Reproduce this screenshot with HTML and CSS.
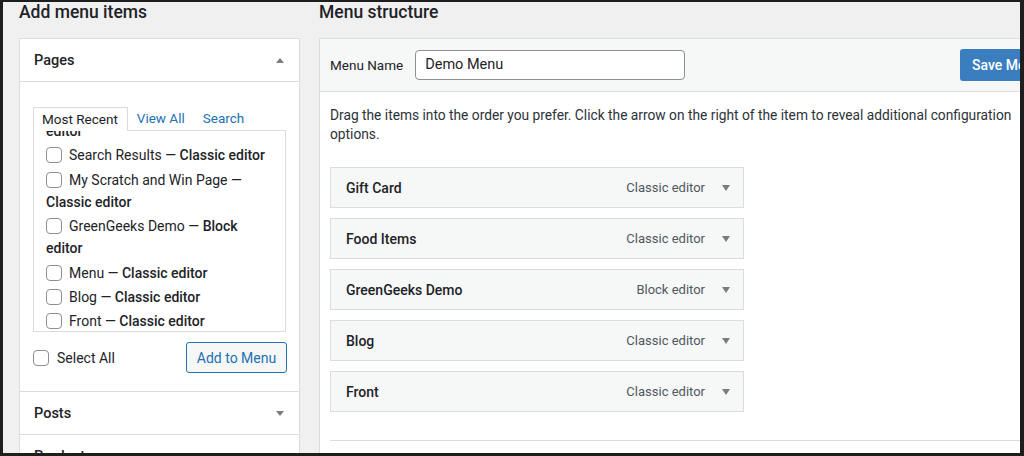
FILE: index.html
```html
<!DOCTYPE html>
<html lang="en">
<head>
<meta charset="utf-8">
<title>Menus</title>
<link rel="stylesheet" href="styles.css">
</head>
<body>
<div class="screen">
  <div class="wrap">
    <div class="col-left">
      <h2 class="title">Add menu items</h2>
      <div class="accordion">
        <div class="sec">
          <div class="sec-head">
            <span>Pages</span>
            <svg class="arrow" width="8" height="5" viewBox="0 0 8 5"><polygon points="4,0 8,5 0,5"/></svg>
          </div>
          <div class="sec-body">
            <div class="tabs">
              <span class="tab active">Most Recent</span>
              <span class="tab">View All</span>
              <span class="tab">Search</span>
            </div>
            <div class="tab-panel">
              <ul class="checklist">
                <li class="cont"><b>editor</b></li>
                <li><span class="cb"></span>Search Results — <b>Classic editor</b></li>
                <li><span class="cb"></span>My Scratch and Win Page — <b>Classic editor</b></li>
                <li><span class="cb"></span>GreenGeeks Demo — <b>Block editor</b></li>
                <li><span class="cb"></span>Menu — <b>Classic editor</b></li>
                <li><span class="cb"></span>Blog — <b>Classic editor</b></li>
                <li><span class="cb"></span>Front — <b>Classic editor</b></li>
              </ul>
            </div>
            <div class="actions">
              <label class="select-all"><span class="cb"></span>Select All</label>
              <span class="btn-secondary">Add to Menu</span>
            </div>
          </div>
        </div>
        <div class="sec">
          <div class="sec-head">
            <span>Posts</span>
            <svg class="arrow" width="8" height="5" viewBox="0 0 8 5"><polygon points="0,0 8,0 4,5"/></svg>
          </div>
        </div>
        <div class="sec">
          <div class="sec-head">
            <span>Products</span>
            <svg class="arrow" width="8" height="5" viewBox="0 0 8 5"><polygon points="0,0 8,0 4,5"/></svg>
          </div>
        </div>
      </div>
    </div>
    <div class="col-right">
      <h2 class="title">Menu structure</h2>
      <div class="menu-panel">
        <div class="menu-head">
          <div class="name-group">
            <span class="label">Menu Name</span>
            <span class="input">Demo Menu</span>
          </div>
          <span class="btn-primary">Save Menu</span>
        </div>
        <div class="menu-body">
          <p class="desc">Drag the items into the order you prefer. Click the arrow on the right of the item to reveal additional configuration options.</p>
          <ul class="items">
            <li class="item"><span class="item-title">Gift Card</span><span class="item-meta">Classic editor</span><svg class="item-arrow" width="8" height="6" viewBox="0 0 8 6"><polygon points="0,0 8,0 4,6"/></svg></li>
            <li class="item"><span class="item-title">Food Items</span><span class="item-meta">Classic editor</span><svg class="item-arrow" width="8" height="6" viewBox="0 0 8 6"><polygon points="0,0 8,0 4,6"/></svg></li>
            <li class="item"><span class="item-title">GreenGeeks Demo</span><span class="item-meta">Block editor</span><svg class="item-arrow" width="8" height="6" viewBox="0 0 8 6"><polygon points="0,0 8,0 4,6"/></svg></li>
            <li class="item"><span class="item-title">Blog</span><span class="item-meta">Classic editor</span><svg class="item-arrow" width="8" height="6" viewBox="0 0 8 6"><polygon points="0,0 8,0 4,6"/></svg></li>
            <li class="item"><span class="item-title">Front</span><span class="item-meta">Classic editor</span><svg class="item-arrow" width="8" height="6" viewBox="0 0 8 6"><polygon points="0,0 8,0 4,6"/></svg></li>
          </ul>
          <div class="footer"></div>
        </div>
      </div>
    </div>
  </div>
</div>
</body>
</html>
```

FILE: styles.css
```css
* { box-sizing: border-box; }
html, body { margin: 0; padding: 0; background: #1e1e1e; }
body { font-family: Roboto, "Noto Sans", sans-serif; color: #1d2327; font-size: 13px; }

.screen {
  width: 1024px;
  height: 456px;
  border-style: solid;
  border-color: #1e1e1e;
  border-width: 2px 4px 3px 3px;
  background: #f0f0f1;
  overflow: hidden;
}
.wrap {
  display: flex;
  gap: 19px;
  padding-left: 16px;
  width: 1100px;
}
.col-left { width: 281px; flex: none; }
.col-right { width: 760px; flex: none; }

.title {
  margin: 0 0 16px;
  font-size: 17.5px;
  line-height: 20px;
  font-weight: 500;
  color: #1d2327;
}

.accordion {
  background: #fff;
  border: 1px solid #dcdcde;
}
.sec-head {
  height: 43px;
  border-bottom: 1px solid #dcdcde;
  display: flex;
  align-items: center;
  justify-content: space-between;
  padding: 0 15px 0 14px;
  font-size: 14.5px;
  font-weight: 500;
  background: #fff;
}
.arrow { fill: #787c82; }

.sec-body {
  padding: 25px 13px 18px 13px;
  border-bottom: 1px solid #dcdcde;
}

.tabs {
  display: flex;
  height: 24px;
  font-size: 13.5px;
  line-height: 23px;
  position: relative;
  z-index: 1;
}
.tab { padding: 0 9px; color: #2271b1; }
.tab.active {
  color: #1d2327;
  background: #fff;
  border: 1px solid #dcdcde;
  border-bottom: none;
  padding: 0 9px 0 8px;
}
.tab-panel {
  margin-top: -1px;
  height: 202px;
  border: 1px solid #dcdcde;
  overflow: hidden;
  padding: 0 11px 0 12px;
}
.checklist {
  list-style: none;
  margin: -11px 0 0;
  padding: 0;
  font-size: 14px;
  line-height: 22.3px;
}
.checklist li { margin-bottom: 2px; }
.checklist b { font-weight: 500; }
.cb {
  display: inline-block;
  width: 16px;
  height: 16px;
  border: 1px solid #8c8f94;
  border-radius: 4px;
  background: #fff;
  vertical-align: -3px;
  margin-right: 7px;
}

.actions {
  margin-top: 10px;
  display: flex;
  align-items: center;
  justify-content: space-between;
  margin-right: -1px;
}
.select-all { font-size: 14px; display: flex; align-items: center; }
.select-all .cb { margin-right: 8px; }
.btn-secondary {
  display: inline-flex;
  align-items: center;
  justify-content: center;
  width: 101px;
  height: 31px;
  border: 1.5px solid #2271b1;
  border-radius: 3px;
  background: #f6f7f7;
  color: #2271b1;
  font-size: 14px;
}

.menu-panel {
  background: #fff;
  border: 1px solid #dcdcde;
}
.menu-head {
  height: 53px;
  background: #f6f7f7;
  border-bottom: 1px solid #dcdcde;
  display: flex;
  align-items: center;
  justify-content: space-between;
  padding: 0 24px 1px 10px;
}
.name-group { display: flex; align-items: center; gap: 12px; }
.label { font-size: 13.5px; }
.input {
  width: 270px;
  height: 30px;
  border: 1px solid #8c8f94;
  border-radius: 4px;
  background: #fff;
  padding: 0 9px;
  font-size: 14.5px;
  line-height: 28px;
}
.btn-primary {
  width: 94px;
  height: 32px;
  background: #3a7ebf;
  color: #fff;
  border-radius: 3px;
  font-size: 14px;
  font-weight: 500;
  display: inline-flex;
  align-items: center;
  padding-left: 12px;
}

.menu-body { padding: 14px 0 0 10px; }
.desc {
  margin: 0;
  max-width: 700px;
  font-size: 13.75px;
  line-height: 19px;
  color: #2c3338;
}
.items {
  list-style: none;
  margin: 23px 0 0;
  padding: 0;
  display: flex;
  flex-direction: column;
  gap: 10px;
}
.item {
  width: 414px;
  height: 41px;
  background: #f6f7f7;
  border: 1px solid #dcdcde;
  display: flex;
  align-items: center;
  padding: 0 13px 0 15px;
}
.item-title { font-size: 14px; font-weight: 500; flex: 1; }
.item-meta { font-size: 13px; color: #50575e; margin-right: 17px; }
.item-arrow { fill: #787c82; }
.footer {
  margin-top: 28px;
  border-top: 1px solid #dcdcde;
  height: 20px;
}
```
